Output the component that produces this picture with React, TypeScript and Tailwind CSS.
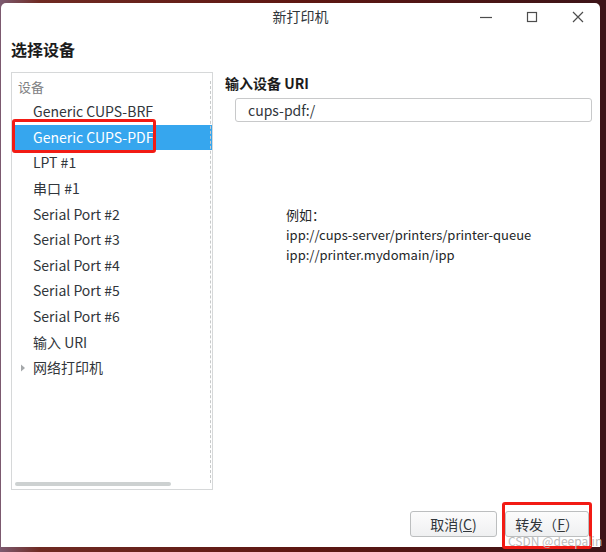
const devices = [
  "Generic CUPS-BRF",
  "Generic CUPS-PDF",
  "LPT #1",
  "串口 #1",
  "Serial Port #2",
  "Serial Port #3",
  "Serial Port #4",
  "Serial Port #5",
  "Serial Port #6",
  "输入 URI",
];

const font = "font-['Noto_Sans_CJK_SC','Noto_Sans',sans-serif]";

export default function App() {
  return (
    <div
      className={`relative w-[606px] h-[552px] overflow-hidden bg-[#4a1a1c] bg-[linear-gradient(90deg,#7c5a70_0px,#6f2a22_40px,#5e1712_300px,#3d1418_600px)] pt-[3px] pl-[1px] pr-[6px] pb-[5px] ${font}`}
    >
      <div className="flex h-full flex-col rounded-t-[5px] bg-white text-[#232627]">
        {/* title bar */}
        <div className="grid h-[27px] grid-cols-[1fr_auto_1fr] items-center">
          <div />
          <div className="text-[14px] text-[#31363b]">新打印机</div>
          <div className="flex items-center justify-end gap-[28px] pr-[13px] text-[#4d4d4d]">
            <svg width="18" height="18" viewBox="0 0 18 18">
              <path d="M3 9.5h12" stroke="currentColor" strokeWidth="1.2" />
            </svg>
            <svg width="18" height="18" viewBox="0 0 18 18">
              <rect x="4.5" y="4.5" width="9" height="9" fill="none" stroke="currentColor" strokeWidth="1.2" />
            </svg>
            <svg width="18" height="18" viewBox="0 0 18 18">
              <path d="M4 4l10 10M14 4L4 14" stroke="currentColor" strokeWidth="1.2" />
            </svg>
          </div>
        </div>

        <div className="flex flex-1 flex-col pl-[10px] pr-[8px]">
          <div className="mt-[8px] h-[22px] text-[16px] font-bold leading-[22px] text-[#1c1c1c]">
            选择设备
          </div>

          <div className="mt-[12px] flex gap-[12px]">
            {/* device list */}
            <div className="relative h-[418px] w-[202px] shrink-0 border border-[#d6d8d9] pt-[1px]">
              <div className="flex h-[25px] items-center pl-[6px] text-[13px] text-[#7f8183]">
                设备
              </div>
              {devices.map((d, i) => (
                <div
                  key={d}
                  className={`flex h-[25.6px] items-center pl-[21px] text-[14px] ${
                    i === 1 ? "bg-[#36a6ee] text-white" : "text-[#31363b]"
                  }`}
                >
                  {d}
                </div>
              ))}
              <div className="flex h-[25.6px] items-center text-[14px] text-[#31363b]">
                <div className="flex w-[21px] justify-center pl-[1px] text-[#a5a8aa]">
                  <svg width="6" height="8" viewBox="0 0 6 8">
                    <path d="M1 0.5L5 4L1 7.5Z" fill="currentColor" />
                  </svg>
                </div>
                网络打印机
              </div>
              {/* column divider */}
              <div className="absolute bottom-[6px] right-[1px] top-[8px] border-r border-dashed border-[#c8caca]" />
              {/* scrollbar */}
              <div className="absolute bottom-[3px] left-[3px] h-[4px] w-[156px] rounded-full bg-[#cdd1d1]" />
            </div>

            {/* uri panel */}
            <div className="flex flex-1 flex-col">
              <div className="flex h-[22px] items-center text-[14px] font-bold text-[#1c1c1c]">
                输入设备 URI
              </div>
              <div className="ml-[10px] mt-[4px] flex h-[24px] items-center rounded-[3px] border border-[#c8c9ca] pl-[12px] text-[14px] text-[#31363b]">
                cups-pdf:/
              </div>
              <div className="ml-[61px] mt-[83px] flex flex-col text-[13px] leading-[20px] text-[#232627]">
                <span>例如：</span>
                <span>ipp://cups-server/printers/printer-queue</span>
                <span>ipp://printer.mydomain/ipp</span>
              </div>
            </div>
          </div>

          {/* buttons */}
          <div className="mt-[21px] flex justify-end gap-[8px] pr-[3px]">
            <button
              type="button"
              className="flex h-[26px] w-[87px] items-center justify-center rounded-[3px] border border-[#bcbebf] bg-[linear-gradient(#fcfcfc,#eff0f1)] text-[14px] text-[#31363b]"
            >
              取消(<span className="underline">C</span>)
            </button>
            <button
              type="button"
              className="flex h-[26px] w-[84px] items-center justify-center rounded-[3px] border border-[#bcbebf] bg-[linear-gradient(#fcfcfc,#eff0f1)] text-[14px] text-[#31363b]"
            >
              转发（<span className="underline">F</span>）
            </button>
          </div>
        </div>
      </div>

      {/* annotations */}
      <div className="pointer-events-none absolute left-[12px] top-[119px] h-[34px] w-[144px] rounded-[3px] border-[3px] border-[#f21b14]" />
      <div className="pointer-events-none absolute left-[502px] top-[502px] h-[47px] w-[90px] rounded-[3px] border-[3px] border-[#f21b14]" />
      <div className="pointer-events-none absolute left-[508px] top-[532px] text-[12px] text-[#bdbdbd]">
        CSDN @deepalin
      </div>
    </div>
  );
}
